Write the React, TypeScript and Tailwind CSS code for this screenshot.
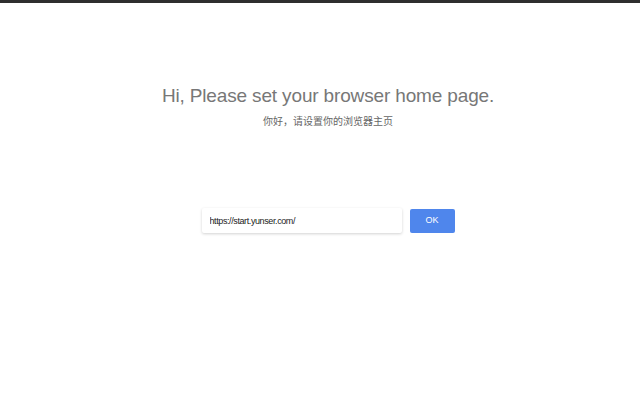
export default function App() {
  return (
    <div className="flex h-[400px] w-[640px] flex-col bg-white font-['Liberation_Sans','Noto_Sans_CJK_SC',sans-serif]">
      <div className="h-[3px] w-full bg-[#2e2e2e]" />
      <main className="flex flex-col items-center pl-4">
        <h1 className="mt-[82px] text-[19px] leading-[22px] tracking-[-0.15px] text-[#777777]">
          Hi, Please set your browser home page.
        </h1>
        <p className="mt-[8px] text-[10px] leading-[14px] text-[#666666]">你好，请设置你的浏览器主页</p>
        <form className="mt-[79px] flex items-start gap-2" onSubmit={(e) => e.preventDefault()}>
          <input
            className="h-[25px] w-[200px] rounded-[2px] bg-white pl-[8px] text-[9px] tracking-[-0.4px] text-[#222] shadow-[0_1px_3px_rgba(0,0,0,0.18)] outline-none"
            defaultValue="https://start.yunser.com/"
          />
          <button
            type="submit"
            className="mt-px h-[24px] w-[45px] rounded-[2px] bg-[#4f86ec] text-[9px] text-white"
          >
            OK
          </button>
        </form>
      </main>
    </div>
  );
}
